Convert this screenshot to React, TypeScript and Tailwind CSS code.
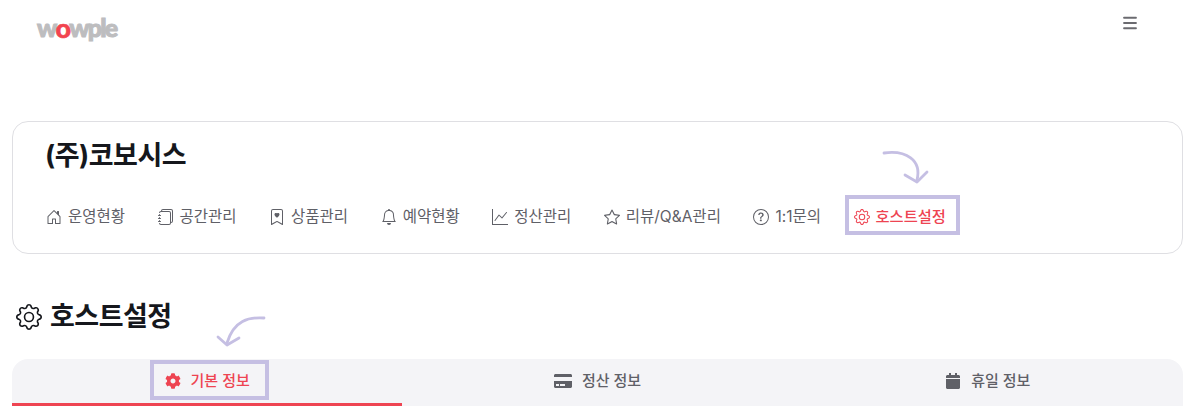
import { BsBell, BsBookmarkHeart, BsGear, BsGraphUp, BsHouseDoor, BsJournals, BsQuestionCircle, BsStar } from 'react-icons/bs';
import { FaCalendar, FaCog, FaCreditCard } from 'react-icons/fa';
import { Menu } from 'lucide-react';

const navItems = [
  { label: '운영현황', icon: BsHouseDoor },
  { label: '공간관리', icon: BsJournals },
  { label: '상품관리', icon: BsBookmarkHeart },
  { label: '예약현황', icon: BsBell },
  { label: '정산관리', icon: BsGraphUp },
  { label: '리뷰/Q&A관리', icon: BsStar },
  { label: '1:1문의', icon: BsQuestionCircle },
];

function Logo() {
  return (
    <div className="-mt-[2px] flex h-[26px] items-center text-[25px] font-black leading-none tracking-[-1.8px] text-[#bdbdbf] [-webkit-text-stroke:1px_#bdbdbf] font-['Lato','Liberation_Sans',sans-serif]">
      <span>w</span>
      <span className="text-[27px] text-[#f2444f] [-webkit-text-stroke:0.6px_#f2444f]">o</span>
      <span>wple</span>
    </div>
  );
}

function Highlight({ className }: { className: string }) {
  return <div className={`pointer-events-none absolute border-[4px] border-[#c5bfe3] ${className}`} />;
}

export default function App() {
  return (
    <div className="relative h-[420px] w-[1195px] overflow-hidden bg-white font-['Inter','Noto_Sans_CJK_KR',sans-serif]">
      <header className="flex h-[121px] items-start justify-between pl-[37px] pr-[56px] pt-[16px]">
        <Logo />
        <Menu className="-mt-[2px] h-[18px] w-[18px] text-[#6b6b70]" strokeWidth={2.4} />
      </header>

      <section className="mx-[12px] h-[133px] rounded-[16px] border border-[#dfdfe3] pl-[33px] pt-[17px]">
        <h1 className="-ml-[1px] text-[27px] font-bold leading-[34px] tracking-[-0.5px] text-[#15171c]">(주)코보시스</h1>
        <nav className="mt-[32px] flex items-center">
          {navItems.map(({ label, icon: Icon }) => (
            <div key={label} className="mr-[32.5px] flex items-center gap-[6px] text-[15.5px] leading-[24px] text-[#5f6067]">
              <Icon className="h-[16px] w-[16px]" />
              <span>{label}</span>
            </div>
          ))}
          <div className="flex items-center gap-[6px] text-[15.3px] font-medium leading-[24px] text-[#ee4452]">
            <BsGear className="h-[16px] w-[16px]" />
            <span>호스트설정</span>
          </div>
        </nav>
      </section>

      <h2 className="ml-[16px] mt-[44px] flex h-[38px] items-center gap-[8px] text-[27px] font-bold tracking-[-0.5px] text-[#15171c]">
        <BsGear className="h-[26px] w-[26px]" />
        호스트설정
      </h2>

      <div className="mx-[12px] mt-[23px] grid h-[47px] grid-cols-3 overflow-hidden rounded-t-[16px] bg-[#f4f4f7]">
        <div className="flex items-center justify-center gap-[10px] border-b-[3px] border-[#ee4452] text-[15px] font-medium text-[#ee4452]">
          <FaCog className="h-[16px] w-[16px]" />
          기본 정보
        </div>
        <div className="flex items-center justify-center gap-[10px] pb-[3px] text-[15px] font-medium text-[#5f6067]">
          <FaCreditCard className="h-[18px] w-[18px]" />
          정산 정보
        </div>
        <div className="flex items-center justify-center gap-[10px] pb-[3px] text-[15px] font-medium text-[#5f6067]">
          <FaCalendar className="h-[16px] w-[16px]" />
          휴일 정보
        </div>
      </div>

      {/* annotations drawn over the page */}
      <Highlight className="left-[845px] top-[195px] h-[40px] w-[115px]" />
      <Highlight className="left-[150px] top-[360px] h-[40px] w-[119px]" />
      <svg className="absolute left-[880px] top-[148px]" width="52" height="38" viewBox="0 0 52 38" fill="none" stroke="#c5bfe3" strokeWidth="2.8" strokeLinecap="round" strokeLinejoin="round">
        <path d="M4 5 C 26 2, 42 12, 37 32" />
        <path d="M25 27 L 37 34 L 47 24" />
      </svg>
      <svg className="absolute left-[214px] top-[312px]" width="54" height="36" viewBox="0 0 54 36" fill="none" stroke="#c5bfe3" strokeWidth="2.8" strokeLinecap="round" strokeLinejoin="round">
        <path d="M50 6 C 35 5, 20 8, 13 31" />
        <path d="M4 25 L 13 33 L 25 26" />
      </svg>
    </div>
  );
}
